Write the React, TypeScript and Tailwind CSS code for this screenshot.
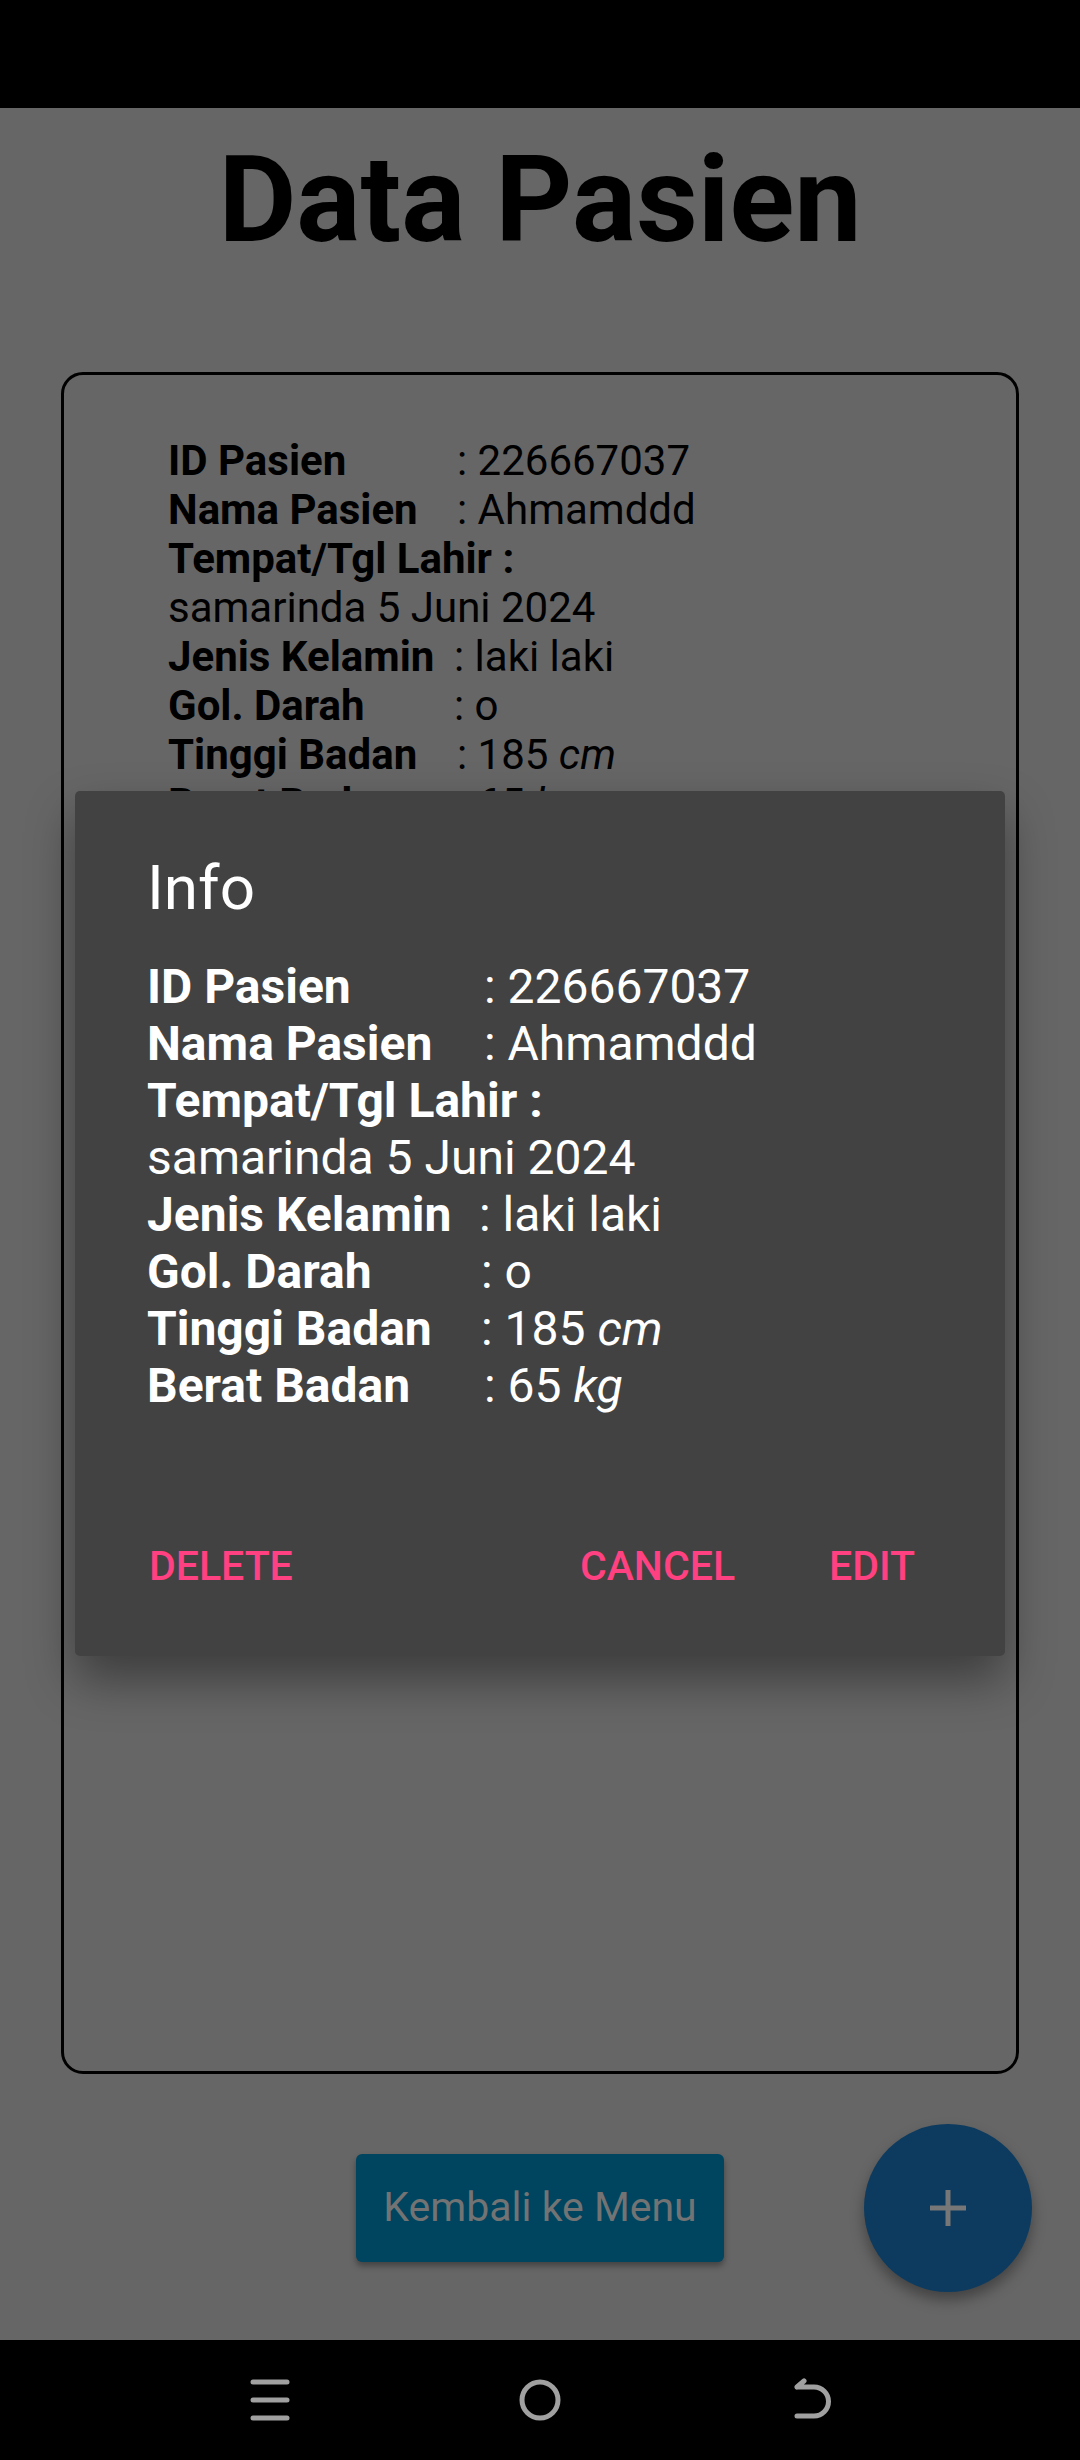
import React from "react";

type Row = { label: string; value: React.ReactNode; card: number; dialog: number };

const rows: Row[] = [
  { label: "ID Pasien", value: "226667037", card: 289, dialog: 337 },
  { label: "Nama Pasien", value: "Ahmamddd", card: 289, dialog: 337 },
  { label: "Jenis Kelamin", value: "laki laki", card: 286, dialog: 332 },
  { label: "Gol. Darah", value: "o", card: 286, dialog: 334 },
  {
    label: "Tinggi Badan",
    value: (
      <>
        185 <i>cm</i>
      </>
    ),
    card: 289,
    dialog: 334,
  },
  {
    label: "Berat Badan",
    value: (
      <>
        65 <i>kg</i>
      </>
    ),
    card: 289,
    dialog: 337,
  },
];

const PatientInfo = ({ dialog }: { dialog?: boolean }) => {
  const line = (r: Row) => (
    <div key={r.label} className="flex whitespace-nowrap">
      <span className="font-bold shrink-0" style={{ width: dialog ? r.dialog : r.card }}>
        {r.label}
      </span>
      <span>: {r.value}</span>
    </div>
  );
  return (
    <div
      className={
        dialog
          ? "text-[48px] leading-[57px] text-white"
          : "text-[42px] leading-[49px] text-black"
      }
    >
      {rows.slice(0, 2).map(line)}
      <div className="font-bold">Tempat/Tgl Lahir :</div>
      <div>samarinda 5 Juni 2024</div>
      {rows.slice(2).map(line)}
    </div>
  );
};

const NavBar = () => (
  <div className="h-[120px] bg-black flex items-center">
    <svg width="40" height="42" viewBox="0 0 40 42" className="ml-[250px]">
      <g stroke="#a0a0a0" strokeWidth="5" strokeLinecap="round">
        <line x1="3" y1="3" x2="37" y2="3" />
        <line x1="3" y1="21" x2="37" y2="21" />
        <line x1="3" y1="39" x2="37" y2="39" />
      </g>
    </svg>
    <svg width="44" height="44" viewBox="0 0 44 44" className="ml-[228px]">
      <circle cx="22" cy="22" r="18" fill="none" stroke="#a0a0a0" strokeWidth="5" />
    </svg>
    <svg width="42" height="44" viewBox="0 0 42 44" className="ml-[230px]">
      <path
        d="M12 3 L5 9 M5 9 H22 A14 14 0 0 1 22 38 H5"
        fill="none"
        stroke="#a0a0a0"
        strokeWidth="5"
        strokeLinecap="round"
        strokeLinejoin="round"
      />
    </svg>
  </div>
);

export default function App() {
  return (
    <div
      className="relative w-[1080px] h-[2460px] bg-[#666666] flex flex-col overflow-hidden"
      style={{ fontFamily: "Roboto, 'Noto Sans', sans-serif" }}
    >
      <div className="h-[108px] bg-black shrink-0" />

      <div className="flex-1 flex flex-col">
        <h1 className="mt-[22px] text-center text-[120px] leading-[140px] font-bold text-black">
          Data Pasien
        </h1>

        <div className="mt-[102px] mx-[61px] h-[1702px] border-[3px] border-black rounded-[22px] pt-[61px] pl-[104px]">
          <PatientInfo />
        </div>

        <div className="flex justify-center mt-[80px]">
          <button className="w-[368px] h-[108px] rounded-[6px] bg-[#004560] text-[41px] text-[#737373] shadow-[0_4px_6px_rgba(0,0,0,0.35)]">
            Kembali ke Menu
          </button>
        </div>
      </div>

      <NavBar />

      {/* floating action button */}
      <div className="absolute left-[864px] top-[2124px] w-[168px] h-[168px] rounded-full bg-[#0d3b5f] flex items-center justify-center shadow-[0_8px_14px_rgba(0,0,0,0.35)]">
        <svg width="36" height="36" viewBox="0 0 36 36">
          <g stroke="#777777" strokeWidth="5">
            <line x1="18" y1="0" x2="18" y2="36" />
            <line x1="0" y1="18" x2="36" y2="18" />
          </g>
        </svg>
      </div>

      {/* info dialog */}
      <div className="absolute left-[75px] top-[791px] w-[930px] h-[865px] bg-[#424242] rounded-[5px] shadow-[0_24px_48px_rgba(0,0,0,0.4)] flex flex-col pl-[72px] pt-[60px]">
        <div className="text-[62px] leading-[73px] text-white">Info</div>
        <div className="mt-[34px]">
          <PatientInfo dialog />
        </div>
        <div className="flex items-center mt-[128px] pr-[90px] pl-[2px] text-[41px] leading-[49px] font-medium text-[#ff4081]">
          <span>DELETE</span>
          <span className="ml-auto">CANCEL</span>
          <span className="ml-[94px]">EDIT</span>
        </div>
      </div>
    </div>
  );
}
